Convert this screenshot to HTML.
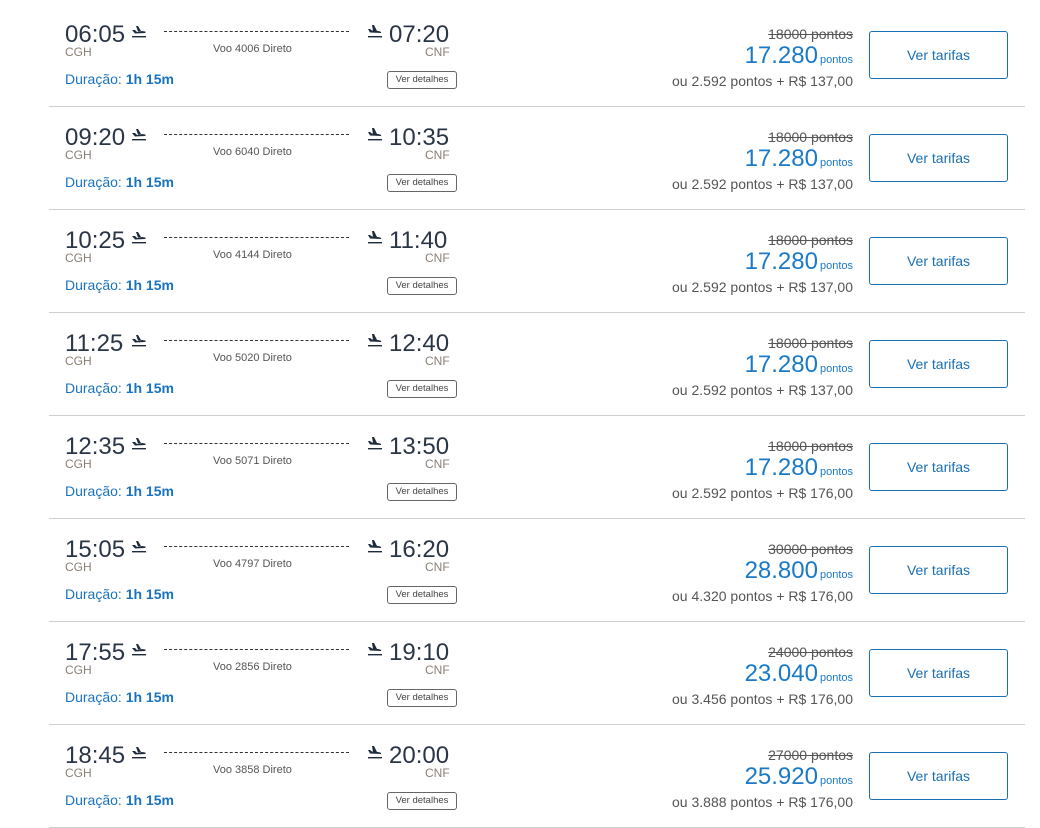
<!DOCTYPE html>
<html><head><meta charset="utf-8"><style>
body{margin:0;width:1040px;height:768px;overflow:hidden;background:#fff;font-family:"Liberation Sans",sans-serif}
.row{position:absolute;left:49px;width:976px;height:103px;border-bottom:1px solid #cfcfcf}
.row div{position:absolute;white-space:nowrap}
.t{font-size:24px;color:#2a3646;top:18px;line-height:28px}
.code{font-size:12px;color:#8a7f75;top:42px}
.dash{left:115px;width:185px;top:28px;border-top:1px dashed #333}
.voo{font-size:11px;color:#555;top:40px;left:164px}
.dur{font-size:14px;color:#1a73c0;left:16px;top:68px}
.dur b{font-weight:bold}
.det{left:338px;top:68px;width:68px;height:16px;border:1px solid #666;border-radius:3px;font-size:9.5px;color:#444;text-align:center;line-height:16px}
.old{right:172px;top:23px;font-size:14px;color:#555;text-decoration:line-through}
.pts{right:172px;top:39px;font-size:24px;color:#1a7ac8;line-height:28px}
.pts span{font-size:11px;margin-left:2px}
.ou{right:172px;top:70px;font-size:14px;color:#555}
.btn{left:820px;top:28px;width:137px;height:46px;border:1px solid #1a6fb3;border-radius:3px;color:#1a6fb3;font-size:14px;text-align:center;line-height:46px}
.pl{width:16px;height:14px}
</style></head><body>
<script>
var d=[["06:05","07:20","4006","18000","17.280","2.592","137,00"],["09:20","10:35","6040","18000","17.280","2.592","137,00"],["10:25","11:40","4144","18000","17.280","2.592","137,00"],["11:25","12:40","5020","18000","17.280","2.592","137,00"],["12:35","13:50","5071","18000","17.280","2.592","176,00"],["15:05","16:20","4797","30000","28.800","4.320","176,00"],["17:55","19:10","2856","24000","23.040","3.456","176,00"],["18:45","20:00","3858","27000","25.920","3.888","176,00"]];
var dep='<svg class="pl" viewBox="0 0 16 14"><path d="M1 6 L4 6 L6 8 L11 7 L14 7.5 Q15.5 8 14 9 L4 9.5 Z" fill="#1d2b3c"/><path d="M7 7.5 L5 2 L7 2 L10 7Z" fill="#1d2b3c"/><rect x="1" y="12" width="14" height="1.4" fill="#1d2b3c"/></svg>';
var arr='<svg class="pl" viewBox="0 0 16 14"><path d="M1 5 L3 5 L5 6.5 L11 7 Q15 7.5 14 9 L3 8.5 Z" fill="#1d2b3c"/><path d="M6 7 L5 1 L7 1 L10 7Z" fill="#1d2b3c"/><rect x="1" y="12" width="14" height="1.4" fill="#1d2b3c"/></svg>';
var h='';
d.forEach(function(r,i){h+='<div class="row" style="top:'+(3+103*i)+'px">'+
'<div class="t" style="left:16px">'+r[0]+'</div><div style="left:82px;top:21px">'+dep+'</div>'+
'<div class="code" style="left:16px">CGH</div><div class="dash"></div><div class="voo">Voo '+r[2]+' Direto</div>'+
'<div style="left:318px;top:21px">'+arr+'</div><div class="t" style="left:340px">'+r[1]+'</div>'+
'<div class="code" style="left:376px">CNF</div>'+
'<div class="dur">Duração: <b>1h 15m</b></div><div class="det">Ver detalhes</div>'+
'<div class="old">'+r[3]+' pontos</div><div class="pts">'+r[4]+'<span>pontos</span></div>'+
'<div class="ou">ou '+r[5]+' pontos + R$ '+r[6]+'</div><div class="btn">Ver tarifas</div></div>';});
document.write(h);
</script>
</body></html>
